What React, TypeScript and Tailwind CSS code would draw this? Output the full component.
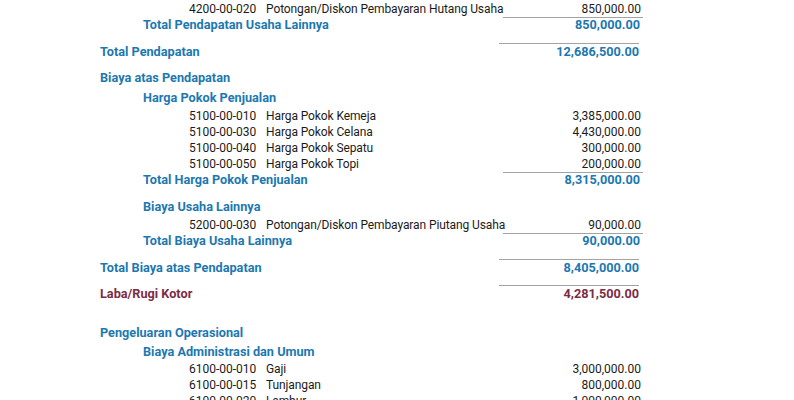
import React from "react";

const blue = "text-[#1d78b0]";
const maroon = "text-[#7b2c45]";

type DetailProps = { code: string; name: string; amount: string; underline?: boolean; className?: string };

function Detail({ code, name, amount, underline, className = "" }: DetailProps) {
  return (
    <div className={`flex h-[16px] leading-[16px] text-[12px] text-[#1b1b1b] ${className}`}>
      <div className="w-[189px] shrink-0" />
      <div className="w-[77px] shrink-0 whitespace-nowrap">{code}</div>
      <div className="w-[237px] shrink-0 whitespace-nowrap tracking-[-0.1px]">{name}</div>
      <div className={`w-[140px] shrink-0 text-right pr-[2px] ${underline ? "border-b border-[#a3a3a3] h-[17px]" : ""}`}>
        {amount}
      </div>
    </div>
  );
}

function Heading({ text, level, className = "" }: { text: string; level: 0 | 1; className?: string }) {
  return (
    <div
      className={`h-[16px] leading-[16px] text-[12.7px] font-bold whitespace-nowrap ${blue} ${level === 0 ? "pl-[100px]" : "pl-[143px]"} ${className}`}
    >
      {text}
    </div>
  );
}

type TotalProps = {
  text: string;
  amount: string;
  level: 0 | 1;
  lineAbove?: boolean;
  color?: string;
  className?: string;
};

function Total({ text, amount, level, lineAbove, color = blue, className = "" }: TotalProps) {
  return (
    <div className={`flex text-[12.7px] font-bold ${color} ${className}`}>
      <div className={`shrink-0 whitespace-nowrap leading-[16px] ${level === 0 ? "w-[499px] pl-[100px]" : "w-[503px] pl-[143px]"} ${lineAbove ? "pt-px" : ""}`}>
        {text}
      </div>
      <div
        className={`shrink-0 text-right leading-[16px] ${level === 0 ? "w-[140px]" : "w-[140px] pr-[3px]"} ${lineAbove ? "border-t border-[#a3a3a3]" : ""}`}
      >
        {amount}
      </div>
    </div>
  );
}

export default function App() {
  return (
    <div className="w-[794px] h-[400px] overflow-hidden bg-white pt-px font-['Roboto','Noto_Sans',sans-serif]">
      <Detail code="4200-00-020" name="Potongan/Diskon Pembayaran Hutang Usaha" amount="850,000.00" underline />
      <Total level={1} text="Total Pendapatan Usaha Lainnya" amount="850,000.00" />

      <Total level={0} text="Total Pendapatan" amount="12,686,500.00" lineAbove className="mt-[10px]" />

      <Heading level={0} text="Biaya atas Pendapatan" className="mt-[10px]" />
      <Heading level={1} text="Harga Pokok Penjualan" className="mt-[4px]" />
      <Detail code="5100-00-010" name="Harga Pokok Kemeja" amount="3,385,000.00" className="mt-[2px]" />
      <Detail code="5100-00-030" name="Harga Pokok Celana" amount="4,430,000.00" />
      <Detail code="5100-00-040" name="Harga Pokok Sepatu" amount="300,000.00" />
      <Detail code="5100-00-050" name="Harga Pokok Topi" amount="200,000.00" underline />
      <Total level={1} text="Total Harga Pokok Penjualan" amount="8,315,000.00" />

      <Heading level={1} text="Biaya Usaha Lainnya" className="mt-[11px]" />
      <Detail code="5200-00-030" name="Potongan/Diskon Pembayaran Piutang Usaha" amount="90,000.00" underline className="mt-[2px]" />
      <Total level={1} text="Total Biaya Usaha Lainnya" amount="90,000.00" />

      <Total level={0} text="Total Biaya atas Pendapatan" amount="8,405,000.00" lineAbove className="mt-[10px]" />
      <Total level={0} text="Laba/Rugi Kotor" amount="4,281,500.00" lineAbove color={maroon} className="mt-[9px]" />

      <Heading level={0} text="Pengeluaran Operasional" className="mt-[23px]" />
      <Heading level={1} text="Biaya Administrasi dan Umum" className="mt-[3px]" />
      <Detail code="6100-00-010" name="Gaji" amount="3,000,000.00" className="mt-px" />
      <Detail code="6100-00-015" name="Tunjangan" amount="800,000.00" />
      <Detail code="6100-00-020" name="Lembur" amount="1,000,000.00" />
    </div>
  );
}
